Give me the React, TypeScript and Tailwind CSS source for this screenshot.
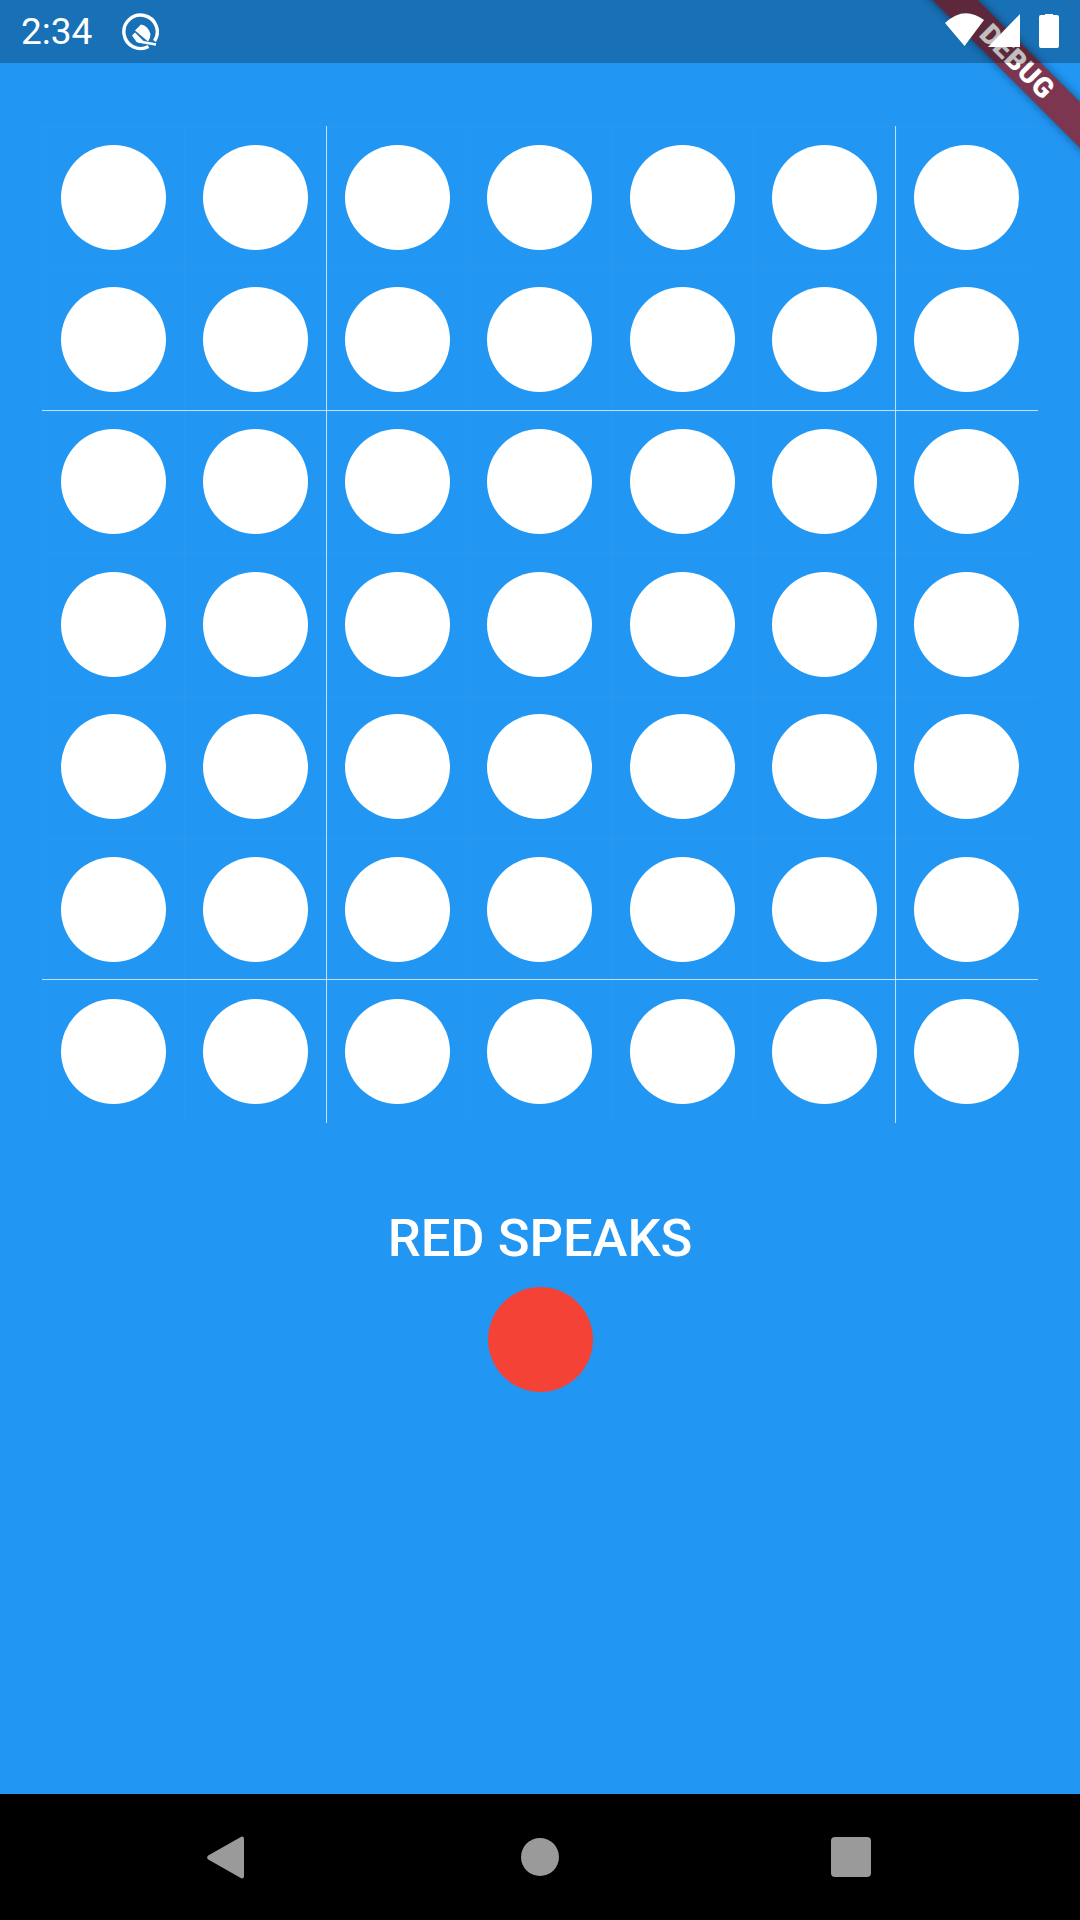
const board = Array.from({ length: 7 }, (_, row) => Array.from({ length: 7 }, (_, col) => ({ row, col })));

// faint cell outline plus the brighter guide lines after rows and columns 2 and 6
const cellLines = (row: number, col: number) => {
  const right = col === 1 || col === 5;
  const bottom = row === 1 || row === 5;
  if (right && bottom) return 'shadow-[inset_1px_1px_0_#ffffff08,inset_-1px_0_0_#ffffffb3,inset_0_-1px_0_#ffffffb3]';
  if (right) return 'shadow-[inset_1px_1px_0_#ffffff08,inset_-1px_0_0_#ffffffb3]';
  if (bottom) return 'shadow-[inset_1px_1px_0_#ffffff08,inset_0_-1px_0_#ffffffb3]';
  return 'shadow-[inset_1px_1px_0_#ffffff08]';
};

const Dot = ({ className }: { className: string }) => <div className={`w-[105px] h-[105px] rounded-full ${className}`} />;

const StatusBar = () => (
  <div className="relative z-20 flex items-center h-[63px] shrink-0 bg-black/25 text-white">
    <span className="ml-[21px] w-[73px] text-[37px] leading-none font-['Roboto',sans-serif]">2:34</span>
    <svg className="ml-[27px] w-[38px] h-[38px]" viewBox="0 0 38 38" fill="none">
      <path d="M33.5 28 A16.7 16.7 0 1 0 27.5 33.5" stroke="white" strokeWidth="3.4" />
      <path d="M20 11.5 Q27 12.5 29.5 21 Q29.5 25.5 27 28.5 L14 17.5 Z" fill="white" />
      <path d="M11 22.5 L14 19.5 L24.5 30 Q19 31 15.5 29 Z" fill="white" />
      <path d="M21 29 L35 31.5" stroke="white" strokeWidth="2.6" />
    </svg>
    <svg className="absolute left-[940px] top-0 w-[125px] h-[63px]" viewBox="0 0 125 63" fill="white">
      <path d="M5 23 Q24 5 44 20 L24.5 46 Z" />
      <path d="M80 14 V47 H48 Z" />
      <path d="M99 17 a2 2 0 0 1 2 -2 h4 v-1 h8 v1 h4 a2 2 0 0 1 2 2 v29 a2 2 0 0 1 -2 2 h-16 a2 2 0 0 1 -2 -2 Z" />
    </svg>
  </div>
);

const App = () => {
  return (
    <div className="relative flex flex-col w-[1080px] h-[1920px] overflow-hidden bg-[#2196f3] font-['Roboto',sans-serif]">
      <StatusBar />

      <main className="flex flex-col items-center flex-1 pt-[63px]">
        <div className="grid grid-cols-7 w-[996px]">
          {board.flat().map(({ row, col }) => (
            <div
              key={`${row}-${col}`}
              className={`flex items-center justify-center h-[142.4px] ${cellLines(row, col)}`}
            >
              <Dot className="bg-white" />
            </div>
          ))}
        </div>
        <p className="mt-[85.2px] text-[52.5px] leading-[61px] font-medium text-white">RED SPEAKS</p>
        <Dot className="mt-[18px] bg-[#f44336]" />
      </main>

      <nav className="flex items-center h-[126px] shrink-0 pl-[207px] bg-black">
        <svg className="w-[37px] h-[43px]" viewBox="0 0 37 43" fill="#9a9a9a">
          <path d="M35 0.5 a2 2 0 0 1 2 2 V40.5 a2 2 0 0 1 -2 2 a2 2 0 0 1 -1.2 -0.4 L1.2 23.5 a2.5 2.5 0 0 1 0 -4 L33.8 0.9 a2 2 0 0 1 1.2 -0.4 Z" />
        </svg>
        <div className="ml-[277px] w-[38px] h-[38px] rounded-full bg-[#9a9a9a]" />
        <div className="ml-[272px] w-[40px] h-[40px] rounded-[4px] bg-[#9a9a9a]" />
      </nav>

      {/* debug ribbon, sits under the status bar tint */}
      <div className="absolute z-10 left-[867px] top-[46px] flex items-center justify-center w-[300px] h-[32px] rotate-45 bg-[#941e27cc] shadow-[0_0_10px_rgba(0,0,0,0.45)]">
        <span className="text-[28px] leading-none font-black text-white tracking-[0.5px]">DEBUG</span>
      </div>
    </div>
  );
};

export default App;
